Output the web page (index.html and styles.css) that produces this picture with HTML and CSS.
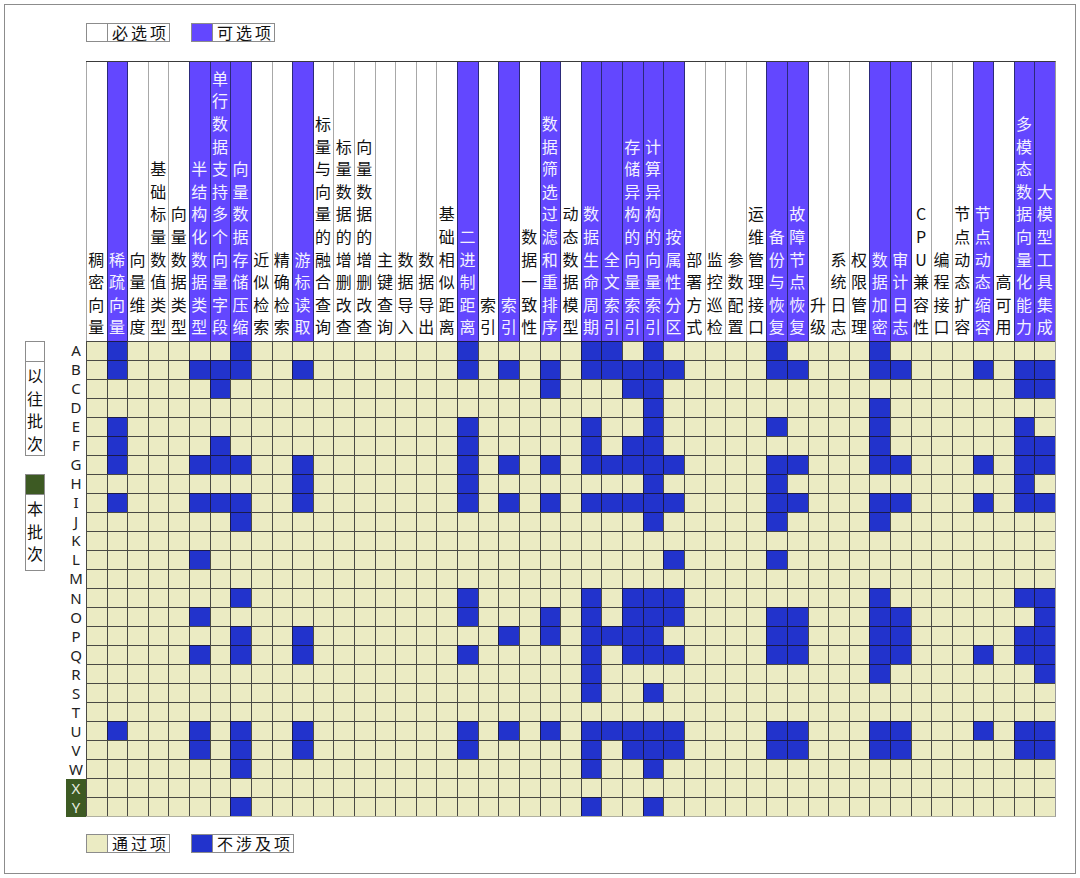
FILE: index.html
```html
<!DOCTYPE html>
<html lang="zh-CN">
<head>
<meta charset="utf-8">
<title>向量数据库测评结果</title>
<link rel="stylesheet" href="styles.css">
</head>
<body>
<div class="frame">
  <div class="legend">
    <div class="item"><span class="sw sw-white"></span><span class="lt">必选项</span></div>
    <div class="item"><span class="sw sw-purple"></span><span class="lt">可选项</span></div>
  </div>
  <div class="chart">
    <div class="head">
      <div class="h"><span>稠密向量</span></div>
      <div class="h p"><span>稀疏向量</span></div>
      <div class="h"><span>向量维度</span></div>
      <div class="h"><span>基础标量数值类型</span></div>
      <div class="h"><span>向量数据类型</span></div>
      <div class="h p"><span>半结构化数据类型</span></div>
      <div class="h p"><span>单行数据支持多个向量字段</span></div>
      <div class="h p"><span>向量数据存储压缩</span></div>
      <div class="h"><span>近似检索</span></div>
      <div class="h"><span>精确检索</span></div>
      <div class="h p"><span>游标读取</span></div>
      <div class="h"><span>标量与向量的融合查询</span></div>
      <div class="h"><span>标量数据的增删改查</span></div>
      <div class="h"><span>向量数据的增删改查</span></div>
      <div class="h"><span>主键查询</span></div>
      <div class="h"><span>数据导入</span></div>
      <div class="h"><span>数据导出</span></div>
      <div class="h"><span>基础相似距离</span></div>
      <div class="h p"><span>二进制距离</span></div>
      <div class="h"><span>索引</span></div>
      <div class="h p"><span>索引</span></div>
      <div class="h"><span>数据一致性</span></div>
      <div class="h p"><span>数据筛选过滤和重排序</span></div>
      <div class="h"><span>动态数据模型</span></div>
      <div class="h p"><span>数据生命周期</span></div>
      <div class="h p"><span>全文索引</span></div>
      <div class="h p"><span>存储异构的向量索引</span></div>
      <div class="h p"><span>计算异构的向量索引</span></div>
      <div class="h p"><span>按属性分区</span></div>
      <div class="h"><span>部署方式</span></div>
      <div class="h"><span>监控巡检</span></div>
      <div class="h"><span>参数配置</span></div>
      <div class="h"><span>运维管理接口</span></div>
      <div class="h p"><span>备份与恢复</span></div>
      <div class="h p"><span>故障节点恢复</span></div>
      <div class="h"><span>升级</span></div>
      <div class="h"><span>系统日志</span></div>
      <div class="h"><span>权限管理</span></div>
      <div class="h p"><span>数据加密</span></div>
      <div class="h p"><span>审计日志</span></div>
      <div class="h"><span>CPU兼容性</span></div>
      <div class="h"><span>编程接口</span></div>
      <div class="h"><span>节点动态扩容</span></div>
      <div class="h p"><span>节点动态缩容</span></div>
      <div class="h"><span>高可用</span></div>
      <div class="h p"><span>多模态数据向量化能力</span></div>
      <div class="h p"><span>大模型工具集成</span></div>
    </div>
    <div class="side">
      <div class="vl"><div class="vsw"></div><div class="vtxt">以往批次</div></div>
      <div class="vl vl-now"><div class="vsw"></div><div class="vtxt">本批次</div></div>
    </div>
    <div class="labels">
      <div>A</div><div>B</div><div>C</div><div>D</div><div>E</div>
      <div>F</div><div>G</div><div>H</div><div>I</div><div>J</div>
      <div>K</div><div>L</div><div>M</div><div>N</div><div>O</div>
      <div>P</div><div>Q</div><div>R</div><div>S</div><div>T</div>
      <div>U</div><div>V</div><div>W</div><div class="cur">X</div><div class="cur">Y</div>
    </div>
    <div class="cells" id="cells"></div>
  </div>
  <div class="legend legend-bottom">
    <div class="item"><span class="sw sw-beige"></span><span class="lt">通过项</span></div>
    <div class="item item-wide"><span class="sw sw-blue"></span><span class="lt">不涉及项</span></div>
  </div>
</div>
<script src="script.js"></script>
</body>
</html>
```

FILE: styles.css
```css
html, body {
  margin: 0;
  padding: 0;
  background: #ffffff;
}
body {
  font-family: "Noto Sans CJK SC", "Noto Sans", sans-serif;
  color: #111;
}
.frame {
  margin: 4px;
  width: 1072px;
  height: 870px;
  box-sizing: border-box;
  border: 1px solid #8c8c8c;
}
.legend {
  display: flex;
  gap: 21px;
  margin: 18px 0 0 81px;
  height: 19px;
}
.legend-bottom {
  margin-top: 17px;
}
.item {
  display: flex;
  border: 1px solid #8c8c8c;
  height: 17px;
}
.sw {
  width: 20px;
  border-right: 1px solid #8c8c8c;
}
.sw-white { background: #ffffff; }
.sw-purple { background: #6347ff; }
.sw-beige { background: #ebebc3; }
.sw-blue { background: #2233cc; }
.lt {
  width: 57px;
  padding-left: 4px;
  font-size: 16px;
  line-height: 17px;
  letter-spacing: 3px;
  white-space: nowrap;
}
.item-wide .lt { width: 76px; }

.chart {
  display: grid;
  grid-template-columns: 20px 21px 20px 970px;
  grid-template-rows: 280px 476px;
  padding-left: 20px;
  margin-top: 19px;
}
.head {
  grid-column: 4;
  grid-row: 1;
  display: grid;
  grid-template-columns: repeat(47, 1fr);
  box-sizing: border-box;
  border-top: 1px solid #3a3a3a;
  border-right: 1px solid #9a9a9a;
}
.h {
  display: flex;
  flex-direction: column;
  justify-content: flex-end;
  align-items: center;
  padding-bottom: 3px;
  box-shadow: inset 1px 0 0 #a8a8a8;
  min-width: 0;
}
.h.p {
  background: #6347ff;
  color: #f4f2ff;
  box-shadow: inset 1px 0 0 #2c2a7a;
}
.h.p + .h {
  box-shadow: inset 1px 0 0 #2c2a7a;
}
.h span {
  display: block;
  width: 17px;
  font-size: 16px;
  line-height: 22.6px;
  text-align: center;
  word-break: break-all;
}

.side {
  grid-column: 1;
  grid-row: 2;
}
.vl {
  width: 20px;
  box-sizing: border-box;
  border: 1px solid #8c8c8c;
  background: #fff;
}
.vl-now {
  margin-top: 18px;
}
.vsw {
  height: 19px;
  border-bottom: 1px solid #8c8c8c;
}
.vl-now .vsw {
  background: #3d5a23;
}
.vtxt {
  height: 91px;
  padding-top: 2px;
  font-size: 16px;
  line-height: 22.5px;
  text-align: center;
  word-break: break-all;
}
.vl-now .vtxt {
  height: 73px;
}

.labels {
  grid-column: 3;
  grid-row: 2;
  display: grid;
  grid-template-rows: repeat(25, 1fr);
}
.labels div {
  font-family: "Noto Sans", "DejaVu Sans", sans-serif;
  font-size: 15px;
  line-height: 19px;
  text-align: center;
  color: #222;
}
.labels .cur {
  background: #3d5a23;
  color: #e6ece0;
}

.cells {
  grid-column: 4;
  grid-row: 2;
  display: grid;
  grid-template-columns: repeat(47, 1fr);
  grid-template-rows: repeat(25, 1fr);
  box-sizing: border-box;
  border-right: 1px solid #9a9a9a;
  border-bottom: 1px solid #b0b0a0;
}
.c {
  background: #ebebc3;
  box-shadow: inset 1px 1px 0 #4a4a44;
  min-width: 0;
}
.c.b {
  background: #2233cc;
  box-shadow: inset 1px 1px 0 #1a1a4a;
}
```

FILE: script.js
```js
(function () {
  var rows = "ABCDEFGHIJKLMNOPQRSTUVWXY";
  var blue = {
    A: [2, 8, 19, 25, 26, 28, 34, 39],
    B: [2, 6, 7, 8, 11, 19, 21, 23, 25, 26, 27, 28, 29, 34, 35, 39, 40, 44, 46, 47],
    C: [7, 23, 27, 28, 46, 47],
    D: [28, 39],
    E: [2, 19, 25, 28, 34, 39, 46],
    F: [2, 7, 19, 25, 27, 28, 39, 46, 47],
    G: [2, 6, 7, 8, 11, 19, 21, 23, 25, 26, 27, 28, 29, 34, 35, 39, 40, 44, 46, 47],
    H: [11, 19, 28, 34, 46],
    I: [2, 6, 7, 8, 11, 19, 21, 23, 25, 26, 27, 28, 29, 34, 35, 39, 40, 44, 46, 47],
    J: [8, 28, 34, 39],
    K: [],
    L: [6, 29, 34],
    M: [],
    N: [8, 19, 25, 27, 28, 29, 39, 46, 47],
    O: [6, 19, 23, 25, 27, 28, 29, 34, 35, 39, 40, 47],
    P: [8, 11, 21, 23, 25, 26, 27, 28, 34, 35, 39, 40, 46, 47],
    Q: [6, 8, 11, 19, 25, 27, 28, 29, 34, 35, 39, 40, 44, 46, 47],
    R: [25, 39, 47],
    S: [25, 28],
    T: [],
    U: [2, 6, 8, 11, 19, 21, 23, 25, 26, 27, 28, 29, 34, 35, 39, 40, 44, 46, 47],
    V: [6, 8, 11, 19, 25, 27, 28, 29, 34, 35, 39, 40, 46, 47],
    W: [8, 25, 28],
    X: [],
    Y: [8, 25, 28]
  };
  var host = document.getElementById("cells");
  var frag = document.createDocumentFragment();
  for (var r = 0; r < rows.length; r++) {
    var list = blue[rows[r]];
    for (var c = 1; c <= 47; c++) {
      var d = document.createElement("div");
      d.className = list.indexOf(c) >= 0 ? "c b" : "c";
      frag.appendChild(d);
    }
  }
  host.appendChild(frag);
})();
```
